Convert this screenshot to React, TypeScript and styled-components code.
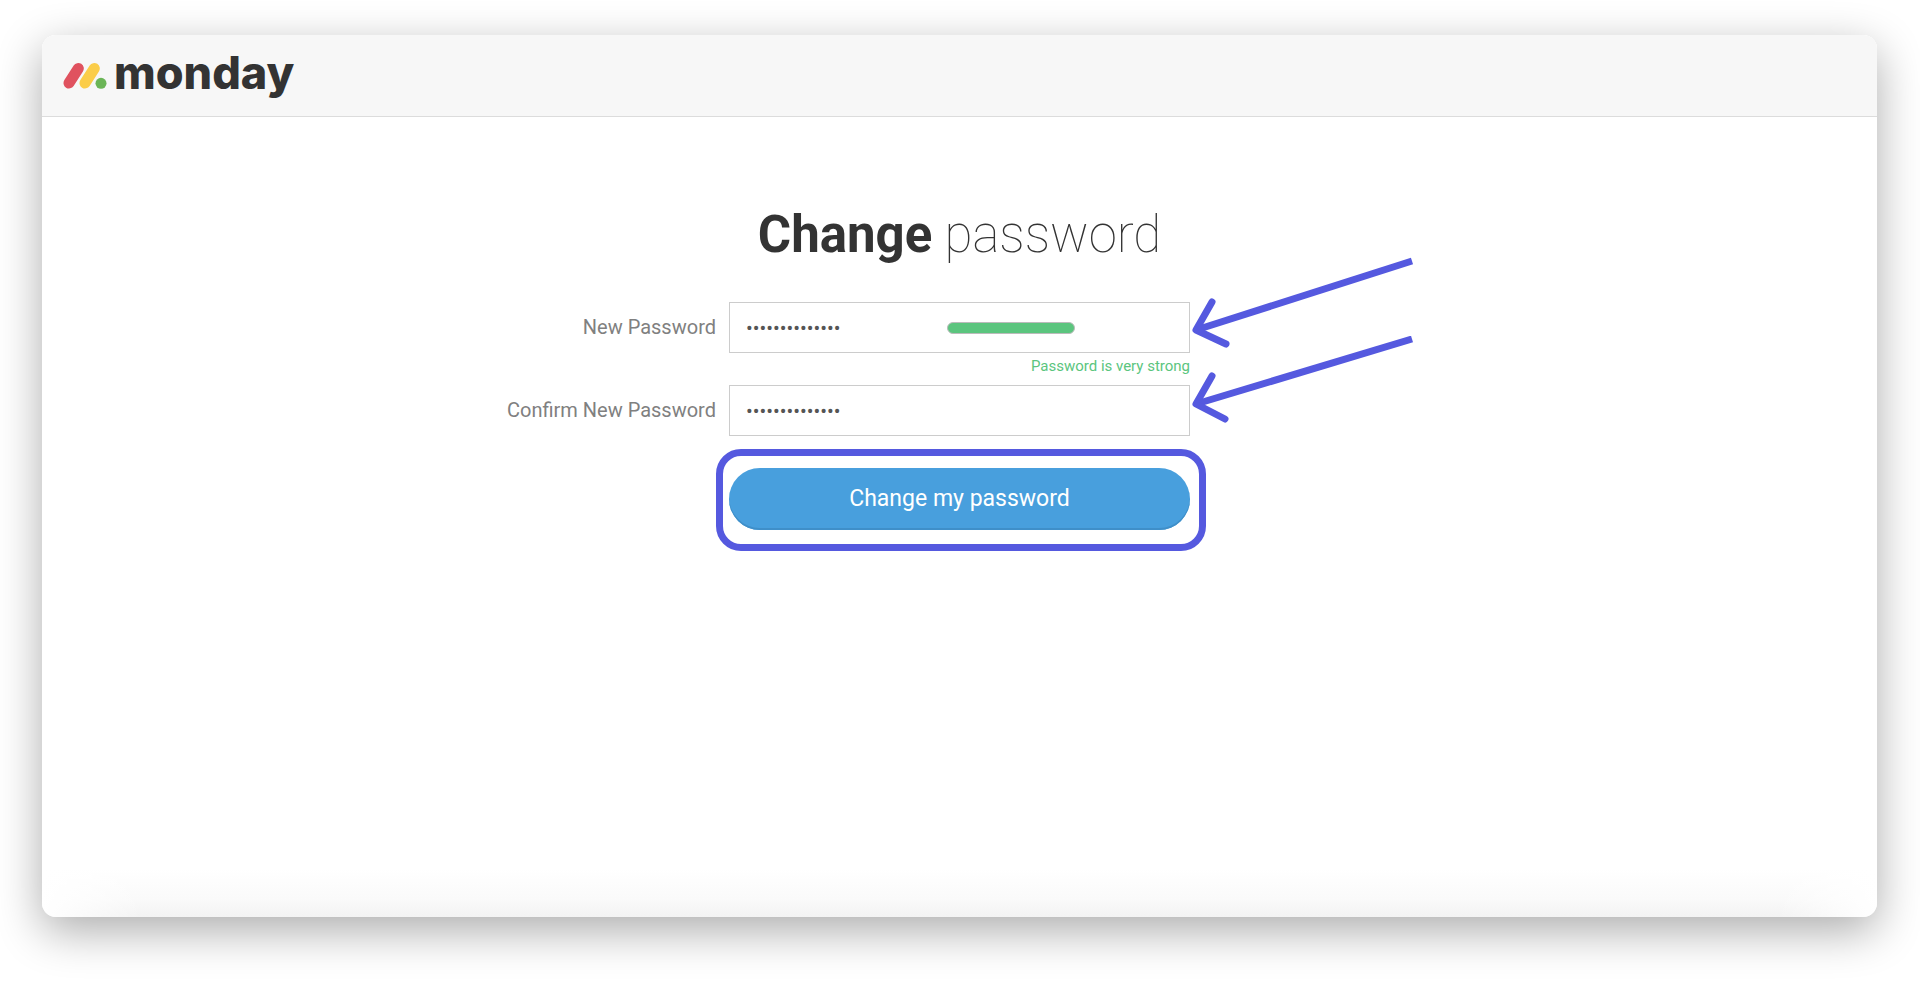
import React, { useState } from "react";
import styled, { createGlobalStyle } from "styled-components";

const GlobalStyle = createGlobalStyle`
  *, *::before, *::after { box-sizing: border-box; }
  body {
    margin: 0;
    background: #fff;
    color: #333;
    font-family: Roboto, "Liberation Sans", sans-serif;
  }
`;

const accent = "#5559df";

const Page = styled.div`
  display: flex;
  min-height: 100vh;
  padding: 35px 43px 65px 42px;
  overflow: hidden;
`;

const Window = styled.div`
  flex: 1;
  display: flex;
  flex-direction: column;
  min-width: 0;
  border-radius: 14px;
  overflow: hidden;
  background:
    linear-gradient(to right, #fff, transparent 100px, transparent calc(100% - 100px), #fff),
    linear-gradient(to top, #f3f3f3, #fafafa 18px, #fff 48px);
  box-shadow: 0 14px 46px rgba(0, 0, 0, 0.33);
`;

const Header = styled.header`
  display: flex;
  align-items: center;
  height: 82px;
  padding: 0 21px;
  background: #f7f7f7;
  border-bottom: 1px solid #dcdcdc;
`;

const Brand = styled.a`
  display: flex;
  align-items: center;
  gap: 7px;
  color: #333;
  text-decoration: none;
`;

const BrandMark = styled.svg`
  display: block;
  width: 44px;
  height: 28px;
`;

const BrandName = styled.span`
  padding-bottom: 6px;
  font-family: Inter, sans-serif;
  font-size: 45px;
  font-weight: 800;
  line-height: 64px;
`;

const Main = styled.main`
  padding: 86px 20px 40px;
`;

const Title = styled.h1`
  margin: 0 0 35px;
  font-size: 51px;
  font-weight: 100;
  line-height: 64px;
  text-align: center;

  strong { font-weight: 700; }
`;

const Form = styled.form`
  display: grid;
  grid-template-columns: 1fr 461px 1fr;
  column-gap: 13px;
`;

const Label = styled.label`
  grid-column: 1;
  color: #808080;
  font-size: 20px;
  font-weight: 400;
  line-height: 50px;
  text-align: right;
`;

const Field = styled.div`
  position: relative;
  grid-column: 2;
`;

const PasswordInput = styled.input`
  display: block;
  width: 100%;
  height: 51px;
  padding: 0 16px;
  border: 1px solid #ccc;
  border-radius: 0;
  background: #fff;
  color: #555;
  font-family: Roboto, sans-serif;
  font-size: 20px;
  outline: none;
`;

const StrengthBar = styled.div`
  position: absolute;
  top: 20px;
  right: 115px;
  width: 128px;
  height: 12px;
  border: 1px solid #bbb;
  border-radius: 6px;
  background: #5bc57e;
`;

const StrengthText = styled.p`
  grid-column: 2;
  margin: 0;
  height: 32px;
  color: #5bc57e;
  font-size: 15px;
  font-weight: 400;
  line-height: 26px;
  text-align: right;
`;

const Submit = styled.div`
  position: relative;
  grid-column: 2;
  margin-top: 32px;

  &::after {
    content: "";
    position: absolute;
    inset: -19px -16px -21px -13px;
    border: 7px solid ${accent};
    border-radius: 25px;
    pointer-events: none;
  }
`;

const SubmitButton = styled.button`
  display: block;
  width: 100%;
  height: 62px;
  padding: 0 0 2px;
  border: 0;
  border-radius: 31px;
  background: #489fdd;
  box-shadow: inset 0 -2px 0 #3f8fc9;
  color: #fff;
  font-family: Roboto, sans-serif;
  font-size: 23px;
  cursor: pointer;
`;

const Arrow = styled.svg`
  position: absolute;
  bottom: 0;
  left: 100%;
  width: 230px;
  height: 100px;
  fill: none;
  stroke: ${accent};
  stroke-width: 7px;
  pointer-events: none;
`;

type PointerProps = { head: string; shaft: string };

const Pointer = ({ head, shaft }: PointerProps) => (
  <Arrow viewBox="0 0 230 100" aria-hidden="true">
    <path d={shaft} />
    <path d={head} strokeLinecap="round" strokeLinejoin="round" />
  </Arrow>
);

export default function App() {
  const [password, setPassword] = useState("monday-secret1");
  const [confirmation, setConfirmation] = useState("monday-secret1");

  return (
    <>
      <GlobalStyle />
      <Page>
        <Window>
          <Header>
            <Brand href="#">
              <BrandMark viewBox="0 0 44 28" aria-hidden="true">
                <g fill="none" strokeWidth="11" strokeLinecap="round">
                  <path d="M6 21 15.300 6.500" stroke="#e0525f" />
                  <path d="M22 21 31.300 6.500" stroke="#fbcd49" />
                </g>
                <circle cx="38" cy="21.300" r="5.500" fill="#6bb557" />
              </BrandMark>
              <BrandName>monday</BrandName>
            </Brand>
          </Header>
          <Main>
            <Title>
              <strong>Change</strong> password
            </Title>
            <Form onSubmit={(event) => event.preventDefault()}>
              <Label htmlFor="new-password">New Password</Label>
              <Field>
                <PasswordInput
                  id="new-password"
                  type="password"
                  value={password}
                  onChange={(event) => setPassword(event.target.value)}
                />
                <StrengthBar />
                <Pointer head="M22 49 6 77 36 91" shaft="M6 77 222 8" />
              </Field>
              <StrengthText>Password is very strong</StrengthText>
              <Label htmlFor="confirm-password">Confirm New Password</Label>
              <Field>
                <PasswordInput
                  id="confirm-password"
                  type="password"
                  value={confirmation}
                  onChange={(event) => setConfirmation(event.target.value)}
                />
                <Pointer head="M22 40 6 68 35 83" shaft="M6 68 222 3" />
              </Field>
              <Submit>
                <SubmitButton type="submit">Change my password</SubmitButton>
              </Submit>
            </Form>
          </Main>
        </Window>
      </Page>
    </>
  );
}
